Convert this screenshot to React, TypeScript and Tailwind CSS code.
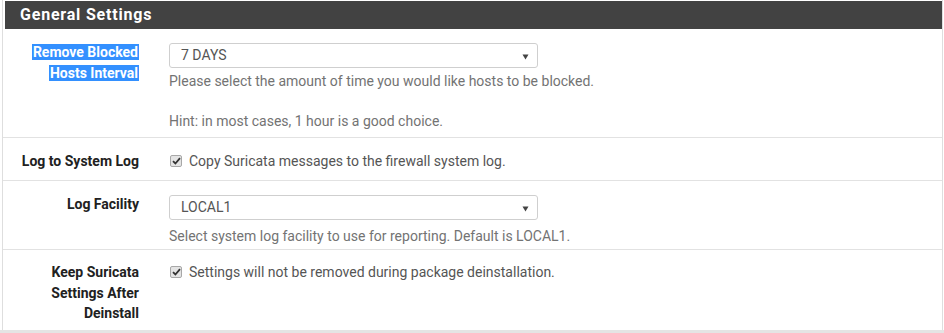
const font = { fontFamily: "Roboto, 'Liberation Sans', sans-serif" };

function Caret() {
  return (
    <svg width="7" height="6" viewBox="0 0 7 6" className="absolute right-[8px] top-[10px]">
      <path d="M0.5 0.5 H6.5 L3.5 5.5 Z" fill="#444" />
    </svg>
  );
}

function Select({ value }: { value: string }) {
  return (
    <div className="relative h-[25px] w-[369px] rounded-[3px] border border-[#cfcfcf] bg-white pl-[11px] text-[14px] leading-[23px] text-[#555]">
      {value}
      <Caret />
    </div>
  );
}

function Check({ label }: { label: string }) {
  return (
    <div className="flex items-center gap-[7px] text-[14px] leading-[20px] text-[#555]">
      <span className="ml-[1px] flex h-[12px] w-[12px] items-center justify-center rounded-[2px] border border-[#a8a8a8] bg-[#e4e4e4]">
        <svg width="9" height="8" viewBox="0 0 9 8">
          <path d="M1 4.2 L3.4 6.5 L8 1.2" stroke="#333" strokeWidth="1.8" fill="none" />
        </svg>
      </span>
      {label}
    </div>
  );
}

function Row({
  label,
  highlight,
  className,
  children,
}: {
  label: string[];
  highlight?: boolean;
  className: string;
  children: React.ReactNode;
}) {
  return (
    <div className={`flex border-b border-[#e2e2e2] ${className}`}>
      <div className="w-[136px] shrink-0 text-right text-[14px] font-bold leading-[20.5px] text-[#212121]">
        {label.map((l) => (
          <div key={l}>
            {highlight ? <span className="bg-[#3390ff] px-[1px] text-white">{l}</span> : l}
          </div>
        ))}
      </div>
      <div className="ml-[30px] flex-1">{children}</div>
    </div>
  );
}

export default function App() {
  return (
    <div className="h-[333px] w-[944px] bg-white" style={font}>
      <div className="ml-[2px] w-[941px] border-x border-[#dedede] pt-[1px]">
        <div className="ml-[2px] flex h-[28px] items-center bg-[#424242] pl-[15px] text-[16px] font-bold tracking-[0.8px] text-white">
          General Settings
        </div>
        <Row label={["Remove Blocked", "Hosts Interval"]} highlight className="h-[109px] pt-[13px]">
          <div className="pt-[1px]">
            <Select value="7 DAYS" />
          </div>
          <div className="mt-[3px] text-[14px] leading-[20px] text-[#737373]">
            Please select the amount of time you would like hosts to be blocked.
            <br />
            <br />
            Hint: in most cases, 1 hour is a good choice.
          </div>
        </Row>
        <Row label={["Log to System Log"]} className="h-[43px] pt-[13px]">
          <Check label="Copy Suricata messages to the firewall system log." />
        </Row>
        <Row label={["Log Facility"]} className="h-[69px] pt-[13px]">
          <div className="pt-[1px]">
            <Select value="LOCAL1" />
          </div>
          <div className="mt-[6px] text-[14px] leading-[20px] text-[#737373]">
            Select system log facility to use for reporting. Default is LOCAL1.
          </div>
        </Row>
        <Row label={["Keep Suricata", "Settings After", "Deinstall"]} className="h-[80px] border-b-0 pt-[12px]">
          <Check label="Settings will not be removed during package deinstallation." />
        </Row>
      </div>
      <div className="h-[4px] w-[944px] bg-[#e4e4e4]" />
    </div>
  );
}
